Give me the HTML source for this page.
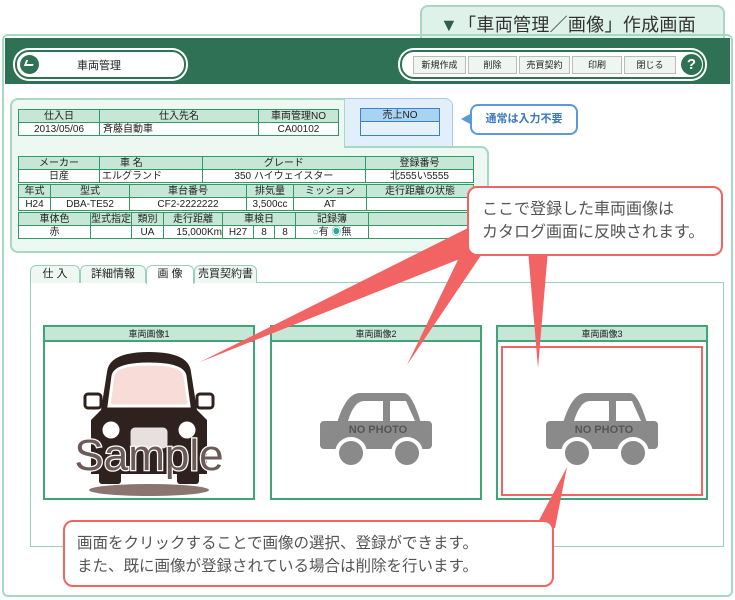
<!DOCTYPE html>
<html><head><meta charset="utf-8"><style>
*{margin:0;padding:0;box-sizing:border-box}
body{width:735px;height:600px;background:#fff;font-family:"Liberation Sans","Noto Sans CJK JP",sans-serif;position:relative;overflow:hidden;color:#222}
.a{position:absolute}
.title{left:420px;top:5px;width:305px;height:34px;background:#dff2ea;border:2px solid #a6d8c4;border-bottom:none;border-radius:8px 8px 0 0;font-size:18px;color:#333;padding:4px 0 0 18px;letter-spacing:0.3px}
.outer{left:2px;top:34px;width:731px;height:563px;border:2px solid #a6d8c4;border-radius:6px}
.hdr{left:5px;top:38px;width:725px;height:46px;background:#2f7155}
.pl{left:15px;top:50px;width:171px;height:29px;background:#fff;border:2px solid #2f7155;box-shadow:0 0 0 2px #fff;border-radius:14px}
.btn{top:56px;height:18px;background:#eef6f1;border:1px solid #bbb;font-size:9px;text-align:center;line-height:16px}
table{border-collapse:collapse;position:absolute;font-size:10px}
td{border:1.5px solid #2f9a66;text-align:center;height:13px;line-height:11px;padding:0;white-space:nowrap;overflow:hidden}
td.h{background:#c6e6d6}
td.v{background:#fff}
.tab{top:265px;height:18px;border:1px solid #9ccfb9;border-bottom:none;border-radius:6px 6px 0 0;background:#eef7f2;font-size:11px;text-align:center;line-height:17px}
.box{top:325px;width:212px;height:175px;border:2px solid #3fa579;background:#fff}
.box .bh{height:15px;background:#c6e6d6;border-bottom:2px solid #3fa579;font-size:9px;text-align:center;line-height:14px}
.call{background:#fff;border:2px solid #f26464;border-radius:10px;color:#555}
</style></head><body>
<div class="a title"><span style="color:#2f5f4a">▼</span>「車両管理／画像」作成画面</div>
<div class="a outer"></div>
<div class="a hdr"></div>
<div class="a pl"><div class="a" style="left:3px;top:3px;width:19px;height:19px;border-radius:50%;background:#2f7155"></div><div class="a" style="left:8px;top:8px;width:9px;height:6px;border-bottom:2px solid #fff;border-left:2px solid #fff;transform:skewX(-20deg)"></div><div class="a" style="left:60px;top:5px;font-size:11px">車両管理</div></div>
<div class="a pl" style="left:400px;width:305px"></div>
<div class="a btn" style="left:413px;width:53px">新規作成</div>
<div class="a btn" style="left:468px;width:49px">削除</div>
<div class="a btn" style="left:519px;width:51px">売買契約</div>
<div class="a btn" style="left:572px;width:50px">印刷</div>
<div class="a btn" style="left:624px;width:52px">閉じる</div>
<div class="a" style="left:681px;top:54px;width:21px;height:21px;border-radius:50%;background:#2f7155;color:#fff;font-weight:bold;font-size:15px;text-align:center;line-height:21px">?</div>

<div class="a" style="left:10px;top:98px;width:340px;height:155px;background:#eef8f3;border:2px solid #a6d8c4;border-radius:8px"></div>
<div class="a" style="left:344px;top:98px;width:109px;height:52px;background:#e1effb;border:1.5px solid #a9cbe8;border-radius:0 8px 0 0;border-left:1px solid #a6d8c4"></div>
<div class="a" style="left:10px;top:147px;width:479px;height:106px;background:#eef8f3;border:2px solid #a6d8c4;border-top:none;border-radius:0 8px 8px 8px"></div>
<div class="a" style="left:344px;top:146px;width:145px;border-top:2px solid #a6d8c4;border-right:2px solid #a6d8c4;border-radius:0 8px 0 0;height:10px"></div>
<table style="left:18px;top:109px;width:321px"><tr><td class="h" style="width:81px">仕入日</td><td class="h" style="width:159px">仕入先名</td><td class="h">車両管理NO</td></tr><tr><td class="v">2013/05/06</td><td class="v" style="text-align:left;padding-left:3px">斉藤自動車</td><td class="v">CA00102</td></tr></table>
<table style="left:360px;top:108px;width:80px"><tr><td class="h" style="border-color:#3d82c8;background:#a9d3f2;height:13px">売上NO</td></tr><tr><td class="v" style="border-color:#3d82c8;background:#e5f2fc;height:14px"></td></tr></table>
<div class="a" style="left:470px;top:104px;width:108px;height:31px;border:2px solid #5b9ad6;border-radius:8px;background:#fff;color:#3a78c0;font-size:11px;font-weight:bold;line-height:27px;text-align:center">通常は入力不要</div>
<div class="a" style="left:461px;top:114px;width:0;height:0;border-top:5px solid transparent;border-bottom:5px solid transparent;border-right:9px solid #5b9ad6"></div>

<table style="left:18px;top:156px;width:456px">
<tr><td class="h" style="width:81px">メーカー</td><td class="h" colspan="3" style="text-align:left;padding-left:20px">車 名</td><td class="h" colspan="3">グレード</td><td class="h" style="width:108px">登録番号</td></tr>
<tr><td class="v">日産</td><td class="v" colspan="3" style="text-align:left;padding-left:2px">エルグランド</td><td class="v" colspan="3">350 ハイウェイスター</td><td class="v">北555い5555</td></tr>
</table>
<table style="left:18px;top:184px;width:456px">
<tr><td class="h" style="width:32px">年式</td><td class="h" style="width:79px">型式</td><td class="h" style="width:117px">車台番号</td><td class="h" style="width:47px">排気量</td><td class="h" style="width:73px">ミッション</td><td class="h">走行距離の状態</td></tr>
<tr><td class="v">H24</td><td class="v">DBA-TE52</td><td class="v">CF2-2222222</td><td class="v">3,500cc</td><td class="v">AT</td><td class="v"></td></tr>
</table>
<table style="left:18px;top:212px;width:456px">
<tr><td class="h" style="width:72px">車体色</td><td class="h" style="width:39px">型式指定</td><td class="h" style="width:32px">類別</td><td class="h" style="width:59px">走行距離</td><td class="h" colspan="3" style="width:73px">車検日</td><td class="h" style="width:73px">記録簿</td><td class="h"></td></tr>
<tr><td class="v">赤</td><td class="v"></td><td class="v">UA</td><td class="v" style="text-align:right">15,000Km</td><td class="v" style="width:31px">H27</td><td class="v" style="width:21px">8</td><td class="v" style="width:21px">8</td><td class="v"><span style="color:#3a9">○</span>有 <span style="color:#3a9">◉</span>無</td><td class="v"></td></tr>
</table>

<div class="a" style="left:30px;top:282px;width:694px;height:265px;border:1.5px solid #9ccfb9;background:#fff"></div>
<div class="a tab" style="left:30px;width:50px">仕 入</div>
<div class="a tab" style="left:80px;width:66px">詳細情報</div>
<div class="a tab" style="left:146px;width:48px;background:#fff;height:19px">画 像</div>
<div class="a tab" style="left:194px;width:63px">売買契約書</div>

<div class="a box" style="left:43px"><div class="bh">車両画像1</div>
<svg class="a" style="left:0;top:15px" width="208" height="156" viewBox="0 0 208 156">
<ellipse cx="104" cy="148" rx="60" ry="6" fill="#8a7570"/>
<path d="M62 30 Q64 10 104 10 Q144 10 146 30 L152 68 L162 78 L162 132 L46 132 L46 78 L56 68 Z" fill="#2e211e"/>
<path d="M68 34 Q70 22 104 22 Q138 22 140 34 L144 64 L64 64 Z" fill="#f7dcd8" stroke="#fff" stroke-width="3"/>
<rect x="40" y="52" width="16" height="14" rx="3" fill="#fff" stroke="#2e211e" stroke-width="3"/>
<rect x="152" y="52" width="16" height="14" rx="3" fill="#fff" stroke="#2e211e" stroke-width="3"/>
<circle cx="66" cy="88" r="10" fill="#fff" stroke="#2e211e" stroke-width="3"/>
<circle cx="142" cy="88" r="10" fill="#fff" stroke="#2e211e" stroke-width="3"/>
<rect x="84" y="84" width="40" height="24" rx="6" fill="#e8e0de" stroke="#2e211e" stroke-width="3"/>
<rect x="54" y="126" width="22" height="16" rx="3" fill="#2e211e"/><rect x="132" y="126" width="22" height="16" rx="3" fill="#2e211e"/>
<text x="104" y="128" font-family="Liberation Sans,sans-serif" font-size="44" text-anchor="middle" fill="#6b5a55" stroke="#fff" stroke-width="2.5" paint-order="stroke">Sample</text>
</svg></div>
<div class="a box" style="left:270px"><div class="bh">車両画像2</div>
<svg class="a" style="left:48px;top:64px" width="112" height="76" viewBox="0 0 112 76"><path d="M17 32 Q26 2 40 2 L84 2 Q92 2 101 32 Z" fill="#8a8a8a"/><path d="M28 30 Q34 10 44 10 L63 10 L63 30 Z M70 10 L86 10 L95 30 L70 30 Z" fill="#fff"/><rect x="0" y="30" width="112" height="28" rx="4" fill="#8a8a8a"/><circle cx="31" cy="62" r="16" fill="#fff"/><circle cx="87" cy="62" r="16" fill="#fff"/><circle cx="31" cy="62" r="12" fill="#8a8a8a"/><circle cx="87" cy="62" r="12" fill="#8a8a8a"/><text x="58" y="42" font-family="Liberation Sans,sans-serif" font-weight="bold" font-size="11" text-anchor="middle" fill="#555">NO PHOTO</text></svg></div>
<div class="a box" style="left:496px"><div class="bh">車両画像3</div>
<div class="a" style="left:3px;top:19px;width:202px;height:150px;border:2px solid #f26464"></div>
<svg class="a" style="left:48px;top:64px" width="112" height="76" viewBox="0 0 112 76"><path d="M17 32 Q26 2 40 2 L84 2 Q92 2 101 32 Z" fill="#8a8a8a"/><path d="M28 30 Q34 10 44 10 L63 10 L63 30 Z M70 10 L86 10 L95 30 L70 30 Z" fill="#fff"/><rect x="0" y="30" width="112" height="28" rx="4" fill="#8a8a8a"/><circle cx="31" cy="62" r="16" fill="#fff"/><circle cx="87" cy="62" r="16" fill="#fff"/><circle cx="31" cy="62" r="12" fill="#8a8a8a"/><circle cx="87" cy="62" r="12" fill="#8a8a8a"/><text x="58" y="42" font-family="Liberation Sans,sans-serif" font-weight="bold" font-size="11" text-anchor="middle" fill="#555">NO PHOTO</text></svg></div>

<svg class="a" style="left:0;top:0" width="735" height="600">
<polygon points="200,362 480,222 495,245" fill="#f26464"/>
<polygon points="407,365 470,235 488,245" fill="#f26464"/>
<polygon points="538,368 528,250 548,250" fill="#f26464"/>
<polygon points="567,467 535,528 555,528" fill="#f26464"/>
</svg>
<div class="a call" style="left:467px;top:186px;width:256px;height:70px;font-size:16px;line-height:23px;padding:10px 0 0 13px">ここで登録した車両画像は<br>カタログ画面に反映されます。</div>
<div class="a call" style="left:63px;top:520px;width:491px;height:67px;font-size:15.5px;line-height:23px;padding:10px 0 0 12px">画面をクリックすることで画像の選択、登録ができます。<br>また、既に画像が登録されている場合は削除を行います。</div>
</body></html>
